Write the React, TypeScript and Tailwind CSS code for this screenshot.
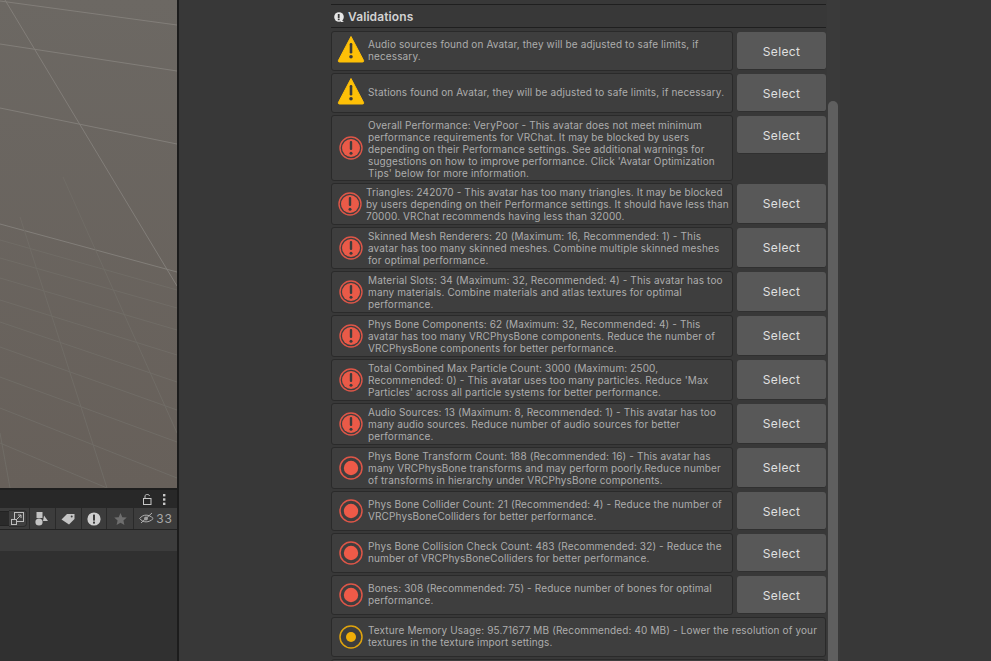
import React from "react";

type Kind = "warn" | "err" | "dot" | "dotY";
type Row = { k: Kind; h: number; b?: number; t: string; pl?: number; full?: boolean };

const rows: Row[] = [
  { k: "warn", h: 40, b: 38, t: "Audio sources found on Avatar, they will be adjusted to safe limits, if\nnecessary." },
  { k: "warn", h: 40, b: 38, t: "Stations found on Avatar, they will be adjusted to safe limits, if necessary." },
  { k: "err", h: 66, b: 38, t: "Overall Performance: VeryPoor - This avatar does not meet minimum\nperformance requirements for VRChat. It may be blocked by users\ndepending on their Performance settings. See additional warnings for\nsuggestions on how to improve performance. Click 'Avatar Optimization\nTips' below for more information." },
  { k: "err", h: 42, b: 40, pl: 1, t: "Triangles: 242070 - This avatar has too many triangles. It may be blocked\nby users depending on their Performance settings. It should have less than\n70000. VRChat recommends having less than 32000." },
  { k: "err", h: 42, b: 40, t: "Skinned Mesh Renderers: 20 (Maximum: 16, Recommended: 1) - This\navatar has too many skinned meshes. Combine multiple skinned meshes\nfor optimal performance." },
  { k: "err", h: 42, b: 40, t: "Material Slots: 34 (Maximum: 32, Recommended: 4) - This avatar has too\nmany materials. Combine materials and atlas textures for optimal\nperformance." },
  { k: "err", h: 42, b: 40, t: "Phys Bone Components: 62 (Maximum: 32, Recommended: 4) - This\navatar has too many VRCPhysBone components. Reduce the number of\nVRCPhysBone components for better performance." },
  { k: "err", h: 42, b: 40, t: "Total Combined Max Particle Count: 3000 (Maximum: 2500,\nRecommended: 0) - This avatar uses too many particles. Reduce 'Max\nParticles' across all particle systems for better performance." },
  { k: "err", h: 42, b: 40, t: "Audio Sources: 13 (Maximum: 8, Recommended: 1) - This avatar has too\nmany audio sources. Reduce number of audio sources for better\nperformance." },
  { k: "dot", h: 42, b: 40, t: "Phys Bone Transform Count: 188 (Recommended: 16) - This avatar has\nmany VRCPhysBone transforms and may perform poorly.Reduce number\nof transforms in hierarchy under VRCPhysBone components." },
  { k: "dot", h: 40, b: 38, t: "Phys Bone Collider Count: 21 (Recommended: 4) - Reduce the number of\nVRCPhysBoneColliders for better performance." },
  { k: "dot", h: 40, b: 38, t: "Phys Bone Collision Check Count: 483 (Recommended: 32) - Reduce the\nnumber of VRCPhysBoneColliders for better performance." },
  { k: "dot", h: 40, b: 38, t: "Bones: 308 (Recommended: 75) - Reduce number of bones for optimal\nperformance." },
  { k: "dotY", h: 40, full: true, t: "Texture Memory Usage: 95.71677 MB (Recommended: 40 MB) - Lower the resolution of your\ntextures in the texture import settings." },
];

function Icon({ k }: { k: Kind }) {
  if (k === "warn")
    return (
      <svg width="28" height="28" viewBox="0 0 28 28">
        <path d="M14 1.5 L26.6 25.5 Q27 27 25.6 27 L2.4 27 Q1 27 1.4 25.5 Z" fill="#fec007" stroke="#fec007" strokeLinejoin="round" />
        <rect x="12.7" y="8" width="2.6" height="10.5" rx="1.2" fill="#3a3a3a" />
        <circle cx="14" cy="21.8" r="1.8" fill="#3a3a3a" />
      </svg>
    );
  if (k === "err")
    return (
      <svg width="24" height="24" viewBox="0 0 24 24">
        <circle cx="12" cy="12" r="11" fill="none" stroke="#de5648" strokeWidth="1.4" />
        <circle cx="12" cy="12" r="9" fill="#ea5a48" />
        <rect x="10.8" y="5" width="2.4" height="9" rx="1.1" fill="#3c3c3c" />
        <circle cx="12" cy="17.2" r="1.5" fill="#3c3c3c" />
      </svg>
    );
  const c = k === "dot" ? "#de5648" : "#e0a40e";
  const f = k === "dot" ? "#ee5a48" : "#f0ae08";
  return (
    <svg width="24" height="24" viewBox="0 0 24 24">
      <circle cx="12" cy="12" r="11" fill="none" stroke={c} strokeWidth="1.5" />
      <circle cx="12" cy="12" r={k === "dot" ? 7.2 : 5} fill={f} />
    </svg>
  );
}

function Select({ h }: { h: number }) {
  return (
    <div
      style={{ height: h, paddingTop: h === 38 ? 2 : 0 }}
      className="w-[89px] shrink-0 mt-px flex items-center justify-center rounded-[3px] bg-[#585858] border-b border-[#303030] text-[#e0e0e0] text-[12px] tracking-[0.35px]"
    >
      Select
    </div>
  );
}

function ValRow({ r }: { r: Row }) {
  const lines = r.t.split("\n").length;
  return (
    <div className="flex gap-[4px] items-start">
      <div
        style={{ height: r.h }}
        className="flex-1 min-w-0 flex items-center rounded-[3px] border border-[#2a2a2a] bg-[#3e3e3e]"
      >
        <div
          className={
            r.k === "warn"
              ? "w-[36px] shrink-0 flex justify-center pl-[2px] pb-[4px]"
              : r.pl
                ? "w-[36px] shrink-0 flex justify-center pr-[1px]"
                : "w-[36px] shrink-0 flex justify-center pl-[2px]"
          }
        >
          <Icon k={r.k} />
        </div>
        <div
          style={{
            marginLeft: r.pl ? -2 : 0,
            paddingTop: lines === 5 ? 1 : 0,
            paddingBottom: lines < 3 ? 2 : 0,
          }}
          className="whitespace-pre text-[#adadad] text-[10px] leading-[12px] tracking-[0.13px]"
        >
          {r.t}
        </div>
      </div>
      {!r.full && <Select h={r.b ?? r.h} />}
    </div>
  );
}

function LeftIcons() {
  return (
    <div className="h-[22px] shrink-0 flex bg-[#3c3c3c] border-b border-[#232323] items-stretch">
      <div className="flex-1 flex items-center justify-end border-r border-[#2a2a2a]">
        <div className="w-[9px] h-[15px] bg-[#2a2a2a] border-y border-[#232323]" />
        <div className="w-[18px] h-[17px] rounded-r-[4px] bg-[#3f3f3f] border border-l-0 border-[#2c2c2c] flex items-center justify-center mr-[2px]">
          <svg width="13" height="13" viewBox="0 0 13 13" fill="none" stroke="#bcbcbc">
            <rect x="3.5" y="0.5" width="9" height="9" />
            <rect x="0.5" y="7.5" width="5" height="5" fill="#3f3f3f" />
            <path d="M6 7 L10 3 M7 3 H10 V6" />
          </svg>
        </div>
      </div>
      <div className="w-[26px] flex items-center justify-center border-r border-[#2a2a2a]">
        <svg width="14" height="14" viewBox="0 0 14 14" fill="#c4c4c4">
          <rect x="1.5" y="0" width="6" height="6" />
          <circle cx="4" cy="10" r="3.6" />
          <path d="M9 3.5 L13 9 L8 9 Z" />
        </svg>
      </div>
      <div className="w-[26px] flex items-center justify-center border-r border-[#2a2a2a]">
        <svg width="14" height="12" viewBox="0 0 14 12">
          <path d="M0.5 6.5 L6 1 L13.5 1 L13.5 6 L8 11.5 Z" fill="#c4c4c4" />
          <circle cx="10.7" cy="3.5" r="1" fill="#3c3c3c" />
        </svg>
      </div>
      <div className="w-[26px] flex items-center justify-center border-r border-[#2a2a2a]">
        <svg width="14" height="14" viewBox="0 0 14 14">
          <circle cx="7" cy="7" r="6.6" fill="#d0d0d0" />
          <rect x="6" y="2.6" width="2" height="6" fill="#3c3c3c" />
          <rect x="6" y="9.6" width="2" height="2" fill="#3c3c3c" />
        </svg>
      </div>
      <div className="w-[27px] flex items-center justify-center border-r border-[#2a2a2a]">
        <svg width="13" height="12" viewBox="0 0 24 23" fill="#6e6e6e">
          <path d="M12 0 L15.5 8 L24 8.8 L17.6 14.4 L19.5 23 L12 18.5 L4.5 23 L6.4 14.4 L0 8.8 L8.5 8 Z" />
        </svg>
      </div>
      <div className="w-[43px] flex items-center pl-[5px] gap-[2px] text-[#a8a8a8] text-[12px] tracking-[0.8px]">
        <svg width="15" height="13" viewBox="0 0 15 13" fill="none" stroke="#b0b0b0">
          <path d="M0.7 6.5 C4 2 10 2 14.2 6.5 C10 11 4 11 0.7 6.5 Z" />
          <path d="M2 11 L13 1" />
          <circle cx="7" cy="6.5" r="2" fill="#a0a0a0" stroke="none" />
        </svg>
        33
      </div>
    </div>
  );
}

export default function App() {
  return (
    <div className="w-[991px] h-[661px] overflow-hidden flex bg-[#383838] font-['Inter','Liberation_Sans',sans-serif]">
      <div className="w-[177px] shrink-0 flex flex-col">
        <div className="h-[488px] shrink-0 bg-gradient-to-b from-[#6c6863] to-[#67605a]">
          <svg width="177" height="488" viewBox="0 0 177 488" fill="none">
            <g stroke="#827e79" strokeWidth="1">
              <path d="M0 1 L177 25 M0 44 L177 71 M0 108 L177 144 M0 224 L177 272 M5 0 L177 286" />
            </g>
            <g stroke="#706c66" strokeWidth="1">
              <path d="M0 240 L177 290 M0 258 L177 308 M0 278 L177 330 M0 300 L177 355 M0 322 L177 382 M0 347 L177 410 M0 377 L177 442 M0 408 L177 478 M0 443 L107 488" />
              <path d="M20 217 L107 488 M63 177 L177 433 M0 433 L10 488" />
            </g>
          </svg>
        </div>
        <div className="h-[20px] shrink-0 bg-[#282828] border-t-2 border-[#1e1e1e] flex items-center justify-end gap-[11px] pr-[11px]">
          <svg width="9" height="11" viewBox="0 0 9 11" fill="none" stroke="#c8c8c8">
            <rect x="0.5" y="4.5" width="7.5" height="6" />
            <path d="M2 4.5 V2 C2 0 6.5 0 6.5 2" />
          </svg>
          <svg width="3" height="11" viewBox="0 0 3 11" fill="#c8c8c8">
            <rect width="2.4" height="2.4" />
            <rect y="4.3" width="2.4" height="2.4" />
            <rect y="8.6" width="2.4" height="2.4" />
          </svg>
        </div>
        <LeftIcons />
        <div className="h-[21px] shrink-0 bg-[#3c3c3c]" />
        <div className="flex-1 bg-[#303030]" />
      </div>
      <div className="w-[2px] shrink-0 bg-[#1c1c1c]" />
      <div className="w-[152px] shrink-0" />
      <div className="w-[495px] shrink-0 flex flex-col">
        <div className="h-[4px] shrink-0" />
        <div className="h-[24px] shrink-0 border-y border-[#1f1f1f] flex items-center gap-[4px] pl-[3px] pt-[2px] text-[#d2d2d2] text-[12px] font-semibold tracking-[0.1px]">
          <svg width="10" height="10" viewBox="0 0 10 10">
            <circle cx="5" cy="5" r="4.8" fill="#e8e8e8" />
            <rect x="3.8" y="2" width="1.8" height="4" fill="#383838" />
            <rect x="3.8" y="6.6" width="1.8" height="1.6" fill="#383838" />
            <path d="M7 8 L10 10 L7 10 Z" fill="#e8e8e8" />
          </svg>
          Validations
        </div>
        <div className="flex flex-col gap-[2px] pt-[3px]">
          {rows.map((r, i) => (
            <ValRow key={i} r={r} />
          ))}
          <div className="h-[10px] rounded-[3px] border border-[#2a2a2a] bg-[#3e3e3e]" />
        </div>
      </div>
      <div className="w-[13px] shrink-0 ml-px bg-[#3a3a3a] pt-[101px] px-[1px]">
        <div className="h-[570px] w-[10px] rounded-t-[5px] bg-[#5f5f5f]" />
      </div>
    </div>
  );
}
